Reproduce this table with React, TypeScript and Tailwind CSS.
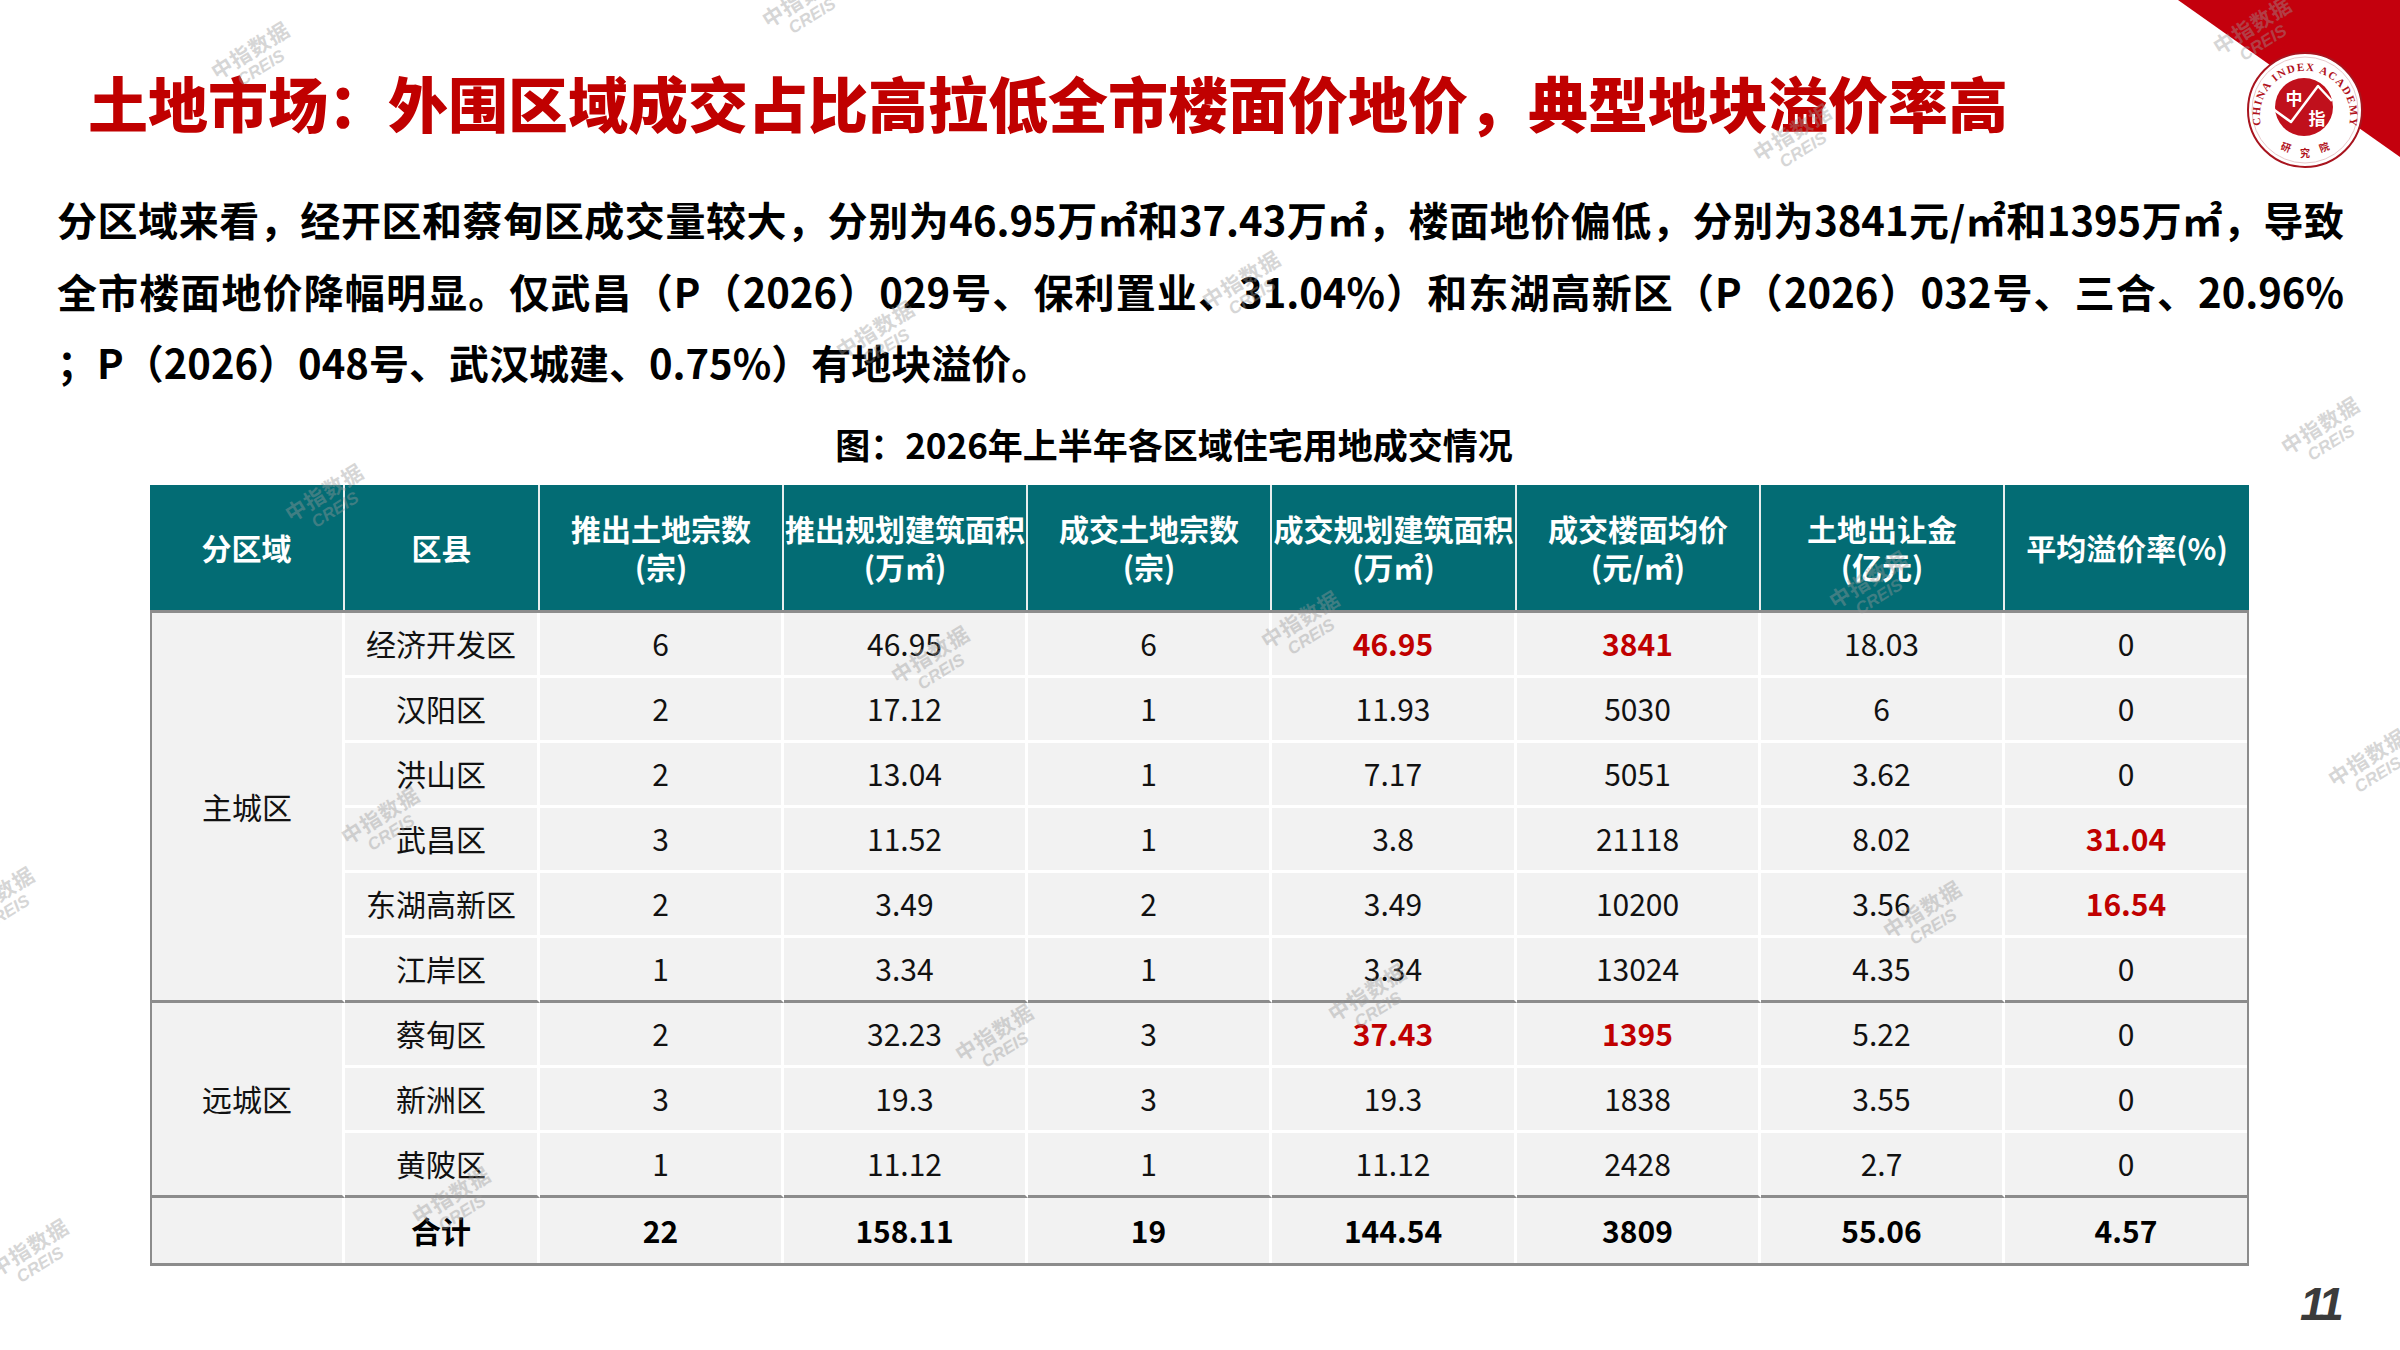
import React from "react";

const header = [
  ["分区域"],
  ["区县"],
  ["推出土地宗数", "(宗)"],
  ["推出规划建筑面积", "(万㎡)"],
  ["成交土地宗数", "(宗)"],
  ["成交规划建筑面积", "(万㎡)"],
  ["成交楼面均价", "(元/㎡)"],
  ["土地出让金", "(亿元)"],
  ["平均溢价率(%)"],
];

const headerWidths = [
  "w-[195px]",
  "w-[195px]",
  "w-[244px]",
  "w-[244px]",
  "w-[244px]",
  "w-[245px]",
  "w-[244px]",
  "w-[244px]",
  "w-[244px]",
];

const rows = [
  ["经济开发区", "6", "46.95", "6", "46.95", "3841", "18.03", "0"],
  ["汉阳区", "2", "17.12", "1", "11.93", "5030", "6", "0"],
  ["洪山区", "2", "13.04", "1", "7.17", "5051", "3.62", "0"],
  ["武昌区", "3", "11.52", "1", "3.8", "21118", "8.02", "31.04"],
  ["东湖高新区", "2", "3.49", "2", "3.49", "10200", "3.56", "16.54"],
  ["江岸区", "1", "3.34", "1", "3.34", "13024", "4.35", "0"],
  ["蔡甸区", "2", "32.23", "3", "37.43", "1395", "5.22", "0"],
  ["新洲区", "3", "19.3", "3", "19.3", "1838", "3.55", "0"],
  ["黄陂区", "1", "11.12", "1", "11.12", "2428", "2.7", "0"],
];

const total = ["合计", "22", "158.11", "19", "144.54", "3809", "55.06", "4.57"];

// row-col keys of the values printed in red
const redCells = new Set(["0-4", "0-5", "3-7", "4-7", "6-4", "6-5"]);

// watermark centres on the slide
const marks = [
  [255, 58],
  [806, 6],
  [880, 337],
  [1797, 140],
  [1246, 287],
  [2257, 33],
  [2325, 433],
  [329, 500],
  [935, 662],
  [1305, 627],
  [1873, 587],
  [385, 823],
  [2372, 765],
  [0, 903],
  [999, 1040],
  [1372, 1000],
  [1927, 917],
  [456, 1203],
  [34, 1255],
];

function Watermark({ x, y }: { x: number; y: number }) {
  return (
    <div
      className="pointer-events-none absolute flex -translate-x-1/2 -translate-y-1/2 -rotate-[32deg] flex-col items-center whitespace-nowrap leading-none text-[#9a9a9a] opacity-40"
      style={{ left: x, top: y }}
    >
      <span className="text-[21px] font-bold tracking-[1px]">中指数据</span>
      <span className="mt-[2px] font-['Liberation_Sans',sans-serif] text-[17px] font-bold italic">CREIS</span>
    </div>
  );
}

function Logo() {
  return (
    <svg className="absolute left-[2240px] top-[45px]" width="130" height="130" viewBox="0 0 130 130">
      <defs>
        <path id="arcTop" d="M 22 84 A 45 45 0 1 1 108 84" />
      </defs>
      <circle cx="65" cy="65" r="57" fill="#fff" stroke="#a8141e" strokeWidth="2" />
      <circle cx="65" cy="65" r="53" fill="none" stroke="#e7c9cb" strokeWidth="1" />
      <text fill="#b1121c" fontFamily="Liberation Serif, serif" fontSize="11" fontWeight="700">
        <textPath href="#arcTop" startOffset="4" textLength="160" lengthAdjust="spacing">
          CHINA INDEX ACADEMY
        </textPath>
      </text>
      <circle cx="64" cy="62" r="29" fill="#c0101c" />
      <polyline
        points="33,64 51,77 78,41 92,56"
        fill="none"
        stroke="#fff"
        strokeWidth="2.5"
        strokeLinejoin="round"
      />
      <text x="54" y="60" textAnchor="middle" fill="#fff" fontSize="17" fontWeight="700" fontFamily="Noto Sans CJK SC, sans-serif">
        中
      </text>
      <text x="77" y="80" textAnchor="middle" fill="#fff" fontSize="17" fontWeight="700" fontFamily="Noto Sans CJK SC, sans-serif">
        指
      </text>
      <text x="41" y="106" fill="#b1121c" fontSize="10" fontWeight="700" fontFamily="Noto Sans CJK SC, serif" transform="rotate(20 46 102)">
        研
      </text>
      <text x="60" y="112" fill="#b1121c" fontSize="10" fontWeight="700" fontFamily="Noto Sans CJK SC, serif">
        究
      </text>
      <text x="79" y="106" fill="#b1121c" fontSize="10" fontWeight="700" fontFamily="Noto Sans CJK SC, serif" transform="rotate(-20 84 102)">
        院
      </text>
    </svg>
  );
}

export default function App() {
  return (
    <div className="relative h-[1350px] w-[2400px] overflow-hidden bg-white font-['Noto_Sans_CJK_SC','Noto_Sans',sans-serif] text-black">
      {/* red corner */}
      <svg className="absolute right-0 top-0" width="222" height="157" viewBox="0 0 222 157">
        <polygon points="0,0 222,0 222,157" fill="#c4000d" />
      </svg>
      <Logo />

      <h1 className="pl-[88px] pt-[72px] text-[60px] font-black leading-none text-[#c00000]">
        土地市场：外围区域成交占比高拉低全市楼面价地价，典型地块溢价率高
      </h1>

      <div className="mt-[52px] w-[2344px] pl-[57px] text-[40px] font-bold leading-[71.5px]">
        <div className="text-justify [text-align-last:justify]">
          分区域来看，经开区和蔡甸区成交量较大，分别为46.95万㎡和37.43万㎡，楼面地价偏低，分别为3841元/㎡和1395万㎡，导致
        </div>
        <div className="text-justify [text-align-last:justify]">
          全市楼面地价降幅明显。仅武昌（P（2026）029号、保利置业、31.04%）和东湖高新区（P（2026）032号、三合、20.96%
        </div>
        <div>；P（2026）048号、武汉城建、0.75%）有地块溢价。</div>
      </div>

      <div className="mt-[27px] w-[2400px] pr-[52px] text-center text-[35px] font-bold leading-none">
        图：2026年上半年各区域住宅用地成交情况
      </div>

      <div className="ml-[150px] mt-[24px] w-[2099px]">
        <div className="flex h-[125px] bg-[#036c74] text-[30px] font-bold leading-[38px] text-white">
          {header.map((h, i) => (
            <div
              key={i}
              className={`${headerWidths[i]} flex flex-col items-center justify-center whitespace-nowrap ${
                i < header.length - 1 ? "border-r-2 border-[#e8eeee]" : ""
              }`}
            >
              {h.map((line) => (
                <span key={line}>{line}</span>
              ))}
            </div>
          ))}
        </div>

        <div className="grid grid-cols-[193px_195px_244px_244px_244px_245px_244px_244px_242px] grid-rows-[repeat(10,65px)] border-x-2 border-b-[3px] border-t-[3px] border-[#8c8c8c] text-[30px] text-[#111]">
          {rows.map((r, ri) => {
            const groupEnd = ri === 5 || ri === 8;
            return (
              <React.Fragment key={ri}>
                {ri === 0 && (
                  <div className="row-span-6 flex items-center justify-center border-b-[3px] border-r-[3px] border-b-[#8c8c8c] border-r-white bg-[#f2f2f2]">
                    主城区
                  </div>
                )}
                {ri === 6 && (
                  <div className="row-span-3 flex items-center justify-center border-b-[3px] border-r-[3px] border-b-[#8c8c8c] border-r-white bg-[#f2f2f2]">
                    远城区
                  </div>
                )}
                {r.map((v, ci) => (
                  <div
                    key={ci}
                    className={`flex items-center justify-center bg-[#f2f2f2] border-b-[3px] ${
                      groupEnd ? "border-b-[#8c8c8c]" : "border-b-white"
                    } ${ci < 7 ? "border-r-[3px] border-r-white" : ""} ${
                      redCells.has(`${ri}-${ci}`) ? "font-bold text-[#c00000]" : ""
                    }`}
                  >
                    {v}
                  </div>
                ))}
              </React.Fragment>
            );
          })}
          <div className="border-r-[3px] border-r-white bg-[#f2f2f2]" />
          {total.map((v, ci) => (
            <div
              key={ci}
              className={`flex items-center justify-center bg-[#f2f2f2] font-bold text-black ${
                ci < 7 ? "border-r-[3px] border-r-white" : ""
              }`}
            >
              {v}
            </div>
          ))}
        </div>
      </div>

      <div className="absolute left-[2300px] top-[1281px] font-['Liberation_Sans',sans-serif] text-[46px] font-bold italic leading-none tracking-[-4px] text-[#3b3b3b]">
        11
      </div>

      {marks.map(([x, y], i) => (
        <Watermark key={i} x={x} y={y} />
      ))}
    </div>
  );
}
